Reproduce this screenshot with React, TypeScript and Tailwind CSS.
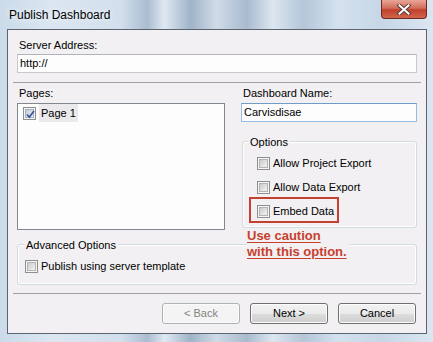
import React from "react";

function Box({ checked = false }: { checked?: boolean }) {
  return (
    <span className="relative flex h-[13px] w-[13px] shrink-0 items-center justify-center border border-[#8e8f8f] bg-[#f5f5f5]">
      <span
        className={
          checked
            ? "h-[9px] w-[9px] border border-[#a7b0c4] bg-[linear-gradient(135deg,#c4cbd9,#eef0f5)]"
            : "h-[9px] w-[9px] border border-[#b4b4b4] bg-[linear-gradient(135deg,#cacaca,#f4f4f4)]"
        }
      />
      {checked && (
        <svg className="absolute left-[1px] top-[1px]" width="11" height="11" viewBox="0 0 11 11">
          <path d="M2 5.5 L4.3 8 L9 2" fill="none" stroke="#3f5b96" strokeWidth="1.8" />
        </svg>
      )}
    </span>
  );
}

function Check({ label, checked = false }: { label: string; checked?: boolean }) {
  return (
    <div className="flex h-[13px] items-center gap-[3px]">
      <Box checked={checked} />
      <span className="leading-[13px]">{label}</span>
    </div>
  );
}

function Button({ label, disabled = false }: { label: string; disabled?: boolean }) {
  return (
    <div
      className={
        disabled
          ? "flex h-[21px] w-[78px] items-center justify-center rounded-[3px] border border-[#adb2b5] bg-[#f4f4f4] text-[#838383] shadow-[inset_0_0_0_1px_#fbfbfb]"
          : "flex h-[21px] w-[78px] items-center justify-center rounded-[3px] border border-[#707070] bg-[linear-gradient(180deg,#f2f2f2_0%,#ebebeb_50%,#dddddd_51%,#cfcfcf_100%)] text-black shadow-[inset_0_0_0_1px_#fcfcfc]"
      }
    >
      {label}
    </div>
  );
}

export default function App() {
  return (
    <div className="flex h-[342px] w-[433px] flex-col bg-[linear-gradient(90deg,#cbdbea_0%,#dbe6f1_12%,#d2dfec_28%,#aabdd0_34%,#dfe8f2_38%,#9fb4c9_44%,#cfdbe7_50%,#a8bbcf_57%,#dce6f0_63%,#b4c6d8_70%,#d4e1ee_78%,#c7d7e7_88%,#dbe6f1_100%)] font-['Liberation_Sans',Arial,sans-serif] text-[11px] text-black">
      {/* title bar */}
      <div className="flex h-[29px] shrink-0 items-start justify-between pl-[9px] pr-[6px]">
        <span className="mt-[7px] text-[12px] leading-[16px] [text-shadow:0_0_6px_#ffffff]">Publish Dashboard</span>
        <div className="flex h-[19px] w-[46px] items-center justify-center rounded-b-[4px] border border-t-0 border-[#6b2b22] bg-[linear-gradient(180deg,#e8a596_0%,#d26e5b_45%,#c1402c_55%,#d2654c_100%)]">
          <svg width="16" height="11" viewBox="0 0 16 11">
            <path d="M3.5 1.5 L12.5 9.5 M12.5 1.5 L3.5 9.5" stroke="#5a3a36" strokeWidth="4" strokeLinecap="square" />
            <path d="M3.5 1.5 L12.5 9.5 M12.5 1.5 L3.5 9.5" stroke="#ffffff" strokeWidth="2" strokeLinecap="square" />
          </svg>
        </div>
      </div>

      {/* client area */}
      <div className="relative ml-[7px] mr-[6px] h-[305px] border border-[#5b6470] bg-[#f2f0f2]">
        <div className="ml-[11px] mt-[7px] leading-[16px]">Server Address:</div>
        <div className="ml-[9px] mt-[1px] flex h-[19px] w-[400px] items-center border border-[#c8c9cc] border-t-[#b1b3b8] bg-[#fcfdfc] pl-[2px]">
          http://
        </div>
        <div className="ml-[5px] mt-[9px] h-px w-[408px] bg-[#a0a0a0]" />

        <div className="flex">
          <div className="ml-[9px] w-[208px]">
            <div className="ml-[2px] mt-[2px] leading-[16px]">Pages:</div>
            <div className="mt-[2px] h-[127px] border border-[#828790] bg-[#fcfdfc]">
              <div className="flex h-[18px] items-center gap-[3px] pl-[5px]">
                <Box checked />
                <span className="flex h-[18px] items-center bg-[#ebe9ec] px-[2px]">Page 1</span>
              </div>
            </div>
          </div>

          <div className="ml-[16px] w-[176px]">
            <div className="ml-[2px] mt-[2px] leading-[16px]">Dashboard Name:</div>
            <div className="mt-[2px] flex h-[19px] items-center border border-[#98bde2] border-t-[#6f9cc9] bg-[#fcfdfc] pl-[2px]">
              Carvisdisae
            </div>
            <div className="relative ml-[1px] mt-[19px] h-[87px] w-[175px] rounded-[3px] border border-[#d3dbe0] shadow-[inset_0_0_0_1px_#ffffff]">
              <span className="absolute left-[5px] top-[-8px] bg-[#f2f0f2] px-[2px] leading-[16px]">Options</span>
              <div className="flex flex-col pl-[6px] pt-[15px]">
                <div className="ml-[8px]">
                  <Check label="Allow Project Export" />
                </div>
                <div className="ml-[8px] mt-[11px]">
                  <Check label="Allow Data Export" />
                </div>
                <div className="mt-[3px] flex h-[26px] w-[90px] items-start border-2 border-[#c6402e] pl-[6px] pt-[6px]">
                  <Check label="Embed Data" />
                </div>
              </div>
            </div>
          </div>
        </div>

        <div className="relative ml-[9px] mt-[14px] h-[41px] w-[400px] rounded-[3px] border border-[#d3dbe0] shadow-[inset_0_0_0_1px_#ffffff]">
          <span className="absolute left-[6px] top-[-8px] bg-[#f2f0f2] px-[2px] leading-[16px]">Advanced Options</span>
          <div className="pl-[7px] pt-[15px]">
            <Check label="Publish using server template" />
          </div>
        </div>

        <div className="ml-[5px] mt-[8px] h-px w-[408px] bg-[#a0a0a0]" />

        <div className="mt-[9px] flex justify-end gap-[10px] pr-[10px]">
          <Button label="< Back" disabled />
          <Button label="Next >" />
          <Button label="Cancel" />
        </div>

        {/* annotation */}
        <div className="absolute left-[239px] top-[198px] bg-[#f2f0f2] pr-[2px] text-[13px] font-bold leading-[16px] text-[#c6402e] underline decoration-1 underline-offset-[2px]">
          <div>Use caution</div>
          <div>with this option.</div>
        </div>
      </div>
    </div>
  );
}
